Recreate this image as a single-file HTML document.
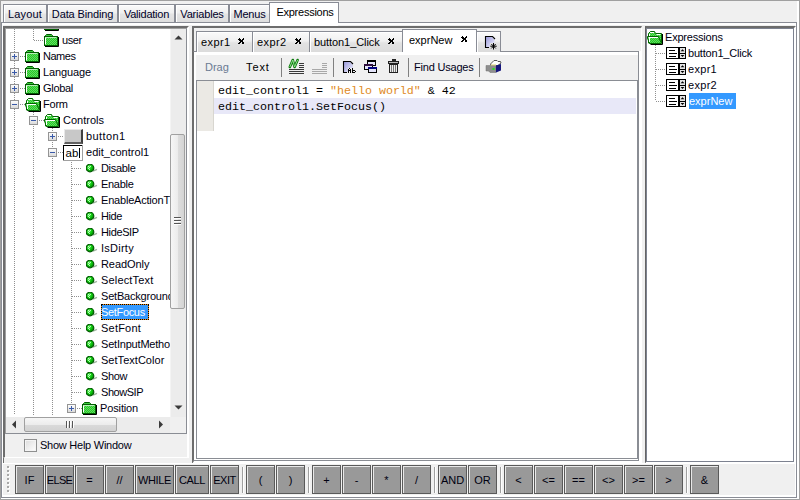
<!DOCTYPE html>
<html><head><meta charset="utf-8">
<style>
*{margin:0;padding:0;box-sizing:border-box}
html,body{width:800px;height:500px;overflow:hidden;background:#f0f0f0;font-family:"Liberation Sans",sans-serif;font-size:11px;color:#000}
.a{position:absolute}
.tab{position:absolute;top:4px;height:18px;border:1px solid #898c95;border-bottom:none;background:linear-gradient(#fafafa,#f0f0f0 45%,#e4e4e4 55%,#dedede);box-shadow:inset 1px 1px 0 #fff;font-size:11px;color:#000028;text-align:center;line-height:18px;white-space:nowrap}
.tab.sel{top:2px;height:21px;background:#fff;box-shadow:none;z-index:2;color:#000;line-height:19px;padding-left:2px}
.sunk{position:absolute;border-top:2px solid #6d6d6d;border-left:2px solid #6d6d6d;border-right:1px solid #fff;border-bottom:1px solid #fff}
.row{position:absolute;height:16px;line-height:16px;white-space:nowrap;color:#000010;letter-spacing:-0.2px}
.btn{position:absolute;top:465px;height:29px;background:#999;border:1px solid #5a5a5a;box-shadow:inset 1px 1px 0 #e8e8e8;text-align:center;line-height:27px;padding-top:1px;font-size:11px;color:#000010}
.sep{position:absolute;top:467px;height:26px;width:2px;border-left:1px solid #a0a0a0;border-right:1px solid #fff}
.dt{position:absolute;top:31px;height:21px;border:1px solid #898c95;border-bottom:none;background:linear-gradient(#fafafa,#f0f0f0 45%,#e2e2e2 55%,#dcdcdc);box-shadow:inset 1px 1px 0 #fff;font-size:11px;line-height:21px;padding-left:5px;white-space:nowrap;color:#000}
.dt.sel{top:29px;height:23px;background:#fff;box-shadow:none;color:#000;line-height:20px}
.x{position:absolute;top:0;font-weight:bold;font-size:11px}
.code{position:absolute;left:218px;font-family:"Liberation Mono",monospace;font-size:11.67px;white-space:pre;line-height:17px;color:#000}
.dv{position:absolute;width:1px;background:repeating-linear-gradient(#909090 0 1px,transparent 1px 2px)}
.dh{position:absolute;height:1px;background:repeating-linear-gradient(90deg,#909090 0 1px,transparent 1px 2px)}
.sel1{background:#3399ff;border:1px solid #f08a10}
.sel1::after{content:"";position:absolute;left:-1px;top:-1px;right:-1px;bottom:-1px;border:1px dotted #000}
svg.a{overflow:visible}
</style></head><body>

<svg width="0" height="0" style="position:absolute">
<defs>
<symbol id="fold" viewBox="0 0 16 14">
<path d="M1.5,2.5 V1.5 L2.5,0.5 H7.5 L8.5,1.5 V2.5 Z" fill="#3ccc3c" stroke="#005c00"/>
<rect x="0.5" y="2.5" width="13" height="9" fill="url(#chk)" stroke="#005c00"/>
<path d="M1.5,3.5 H12.5" stroke="#b8f0b8"/>
<path d="M1.5,3.5 V10.5" stroke="#fff"/>
<path d="M14.5,3 V12.5 H1" stroke="#000" fill="none"/>
</symbol>
<symbol id="ofold" viewBox="0 0 16 14">
<path d="M1.5,12 V2.5 L3.5,0.5 H7.5 L8.5,2.5 H14.5 V12 Z" fill="url(#chk)" stroke="#006400"/>
<path d="M3,1.5 H7 M9.5,3.5 H13.5 M2.5,3 V5" stroke="#fff"/>
<path d="M15.5,3 V13.5 H3.5" stroke="#000" fill="none"/>
<path d="M0.5,5.5 H11.5 L14.5,12.5 H2.5 L0.5,7 Z" fill="url(#chk)" stroke="#006400"/>
<path d="M1.5,6.5 H11 M2.5,7 V11" stroke="#fff"/>
</symbol>
<symbol id="plus" viewBox="0 0 9 9">
<rect x="0.5" y="0.5" width="8" height="8" fill="url(#eg)" stroke="#949494"/>
<path d="M2,4.5 H7 M4.5,2 V7" stroke="#3a5aa8"/>
</symbol>
<symbol id="minus" viewBox="0 0 9 9">
<rect x="0.5" y="0.5" width="8" height="8" fill="url(#eg)" stroke="#949494"/>
<path d="M2,4.5 H7" stroke="#3a5aa8"/>
</symbol>
<pattern id="chk" width="2" height="2" patternUnits="userSpaceOnUse"><rect width="2" height="2" fill="#28c828"/><rect width="1" height="1" fill="#60dc60"/><rect x="1" y="1" width="1" height="1" fill="#60dc60"/></pattern>
<linearGradient id="eg" x1="0" y1="0" x2="0" y2="1"><stop offset="0" stop-color="#fff"/><stop offset="1" stop-color="#d8d8d8"/></linearGradient>
<radialGradient id="bg" cx="0.35" cy="0.35" r="0.7"><stop offset="0" stop-color="#70f070"/><stop offset="0.5" stop-color="#10d010"/><stop offset="1" stop-color="#007800"/></radialGradient>
<symbol id="ball" viewBox="0 0 12 10">
<path d="M7,7.2 L11,5.4" stroke="#a0b4a0" stroke-width="1.3"/>
<circle cx="4" cy="4" r="3.8" fill="url(#bg)" stroke="#005a00" stroke-width="1.2"/>
<path shape-rendering="crispEdges" fill="#e8ffe8" opacity="0.75" d="M2,2h1v1h-1z M4,2h1v1h-1z M3,3h1v1h-1z M2,4h1v1h-1z M3,5h1v1h-1z"/>
</symbol>
<symbol id="list" viewBox="0 0 20 12">
<rect x="0.5" y="0.5" width="19" height="11" fill="#fff" stroke="#000"/>
<rect x="14" y="1" width="5" height="10" fill="#e4e4e4"/>
<path d="M12,0h2v12h-2z" fill="#000"/>
<path d="M3,3.5 H9 M3,6.5 H11 M3,9.5 H10 M14,6.5 H19" stroke="#000" shape-rendering="crispEdges"/>
<path d="M14.6,4.2 L16.5,2.2 L18.4,4.2 Z M14.6,8 L16.5,10 L18.4,8 Z" fill="#000"/>
</symbol>
<symbol id="xx" viewBox="0 0 6 6"><path shape-rendering="crispEdges" fill="#000" d="M1,0h1v1h-1z M5,0h1v1h-1z M0,1h3v1h-3z M4,1h2v1h-2z M1,2h4v1h-4z M2,3h3v1h-3z M1,4h2v1h-2z M4,4h2v1h-2z M0,5h2v1h-2z M4,5h2v1h-2z"/></symbol>
</defs></svg>

<!-- outer frame -->
<div class="a" style="left:0;top:0;width:800px;height:1px;background:#a0a0a0"></div>
<div class="a" style="left:0;top:0;width:1px;height:500px;background:#a0a0a0"></div>
<div class="a" style="left:799px;top:0;width:1px;height:500px;background:#a0a0a0"></div>
<div class="a" style="left:0;top:499px;width:800px;height:1px;background:#a0a0a0"></div>
<div class="a" style="left:797px;top:1px;width:2px;height:498px;background:#fff"></div>
<div class="a" style="left:1px;top:498px;width:798px;height:1px;background:#fff"></div>
<div class="a" style="left:1px;top:22px;width:796px;height:476px;border:1px solid #898c95"></div>
<div class="a" style="left:2px;top:23px;width:794px;height:474px;border-left:1px solid #fff;border-top:2px solid #fff;border-right:1px solid #fff;border-bottom:2px solid #fff"></div>
<!-- top tabs -->
<div class="tab" style="left:3px;width:44px;letter-spacing:0.2px">Layout</div>
<div class="tab" style="left:47px;width:71px;letter-spacing:-0.14px">Data Binding</div>
<div class="tab" style="left:118px;width:57px;letter-spacing:-0.24px">Validation</div>
<div class="tab" style="left:175px;width:54px;letter-spacing:-0.19px">Variables</div>
<div class="tab" style="left:229px;width:41px;letter-spacing:-0.2px">Menus</div>
<div class="tab sel" style="left:269px;width:70px;letter-spacing:-0.25px">Expressions</div>
<div class="a" style="left:270px;top:22px;width:68px;height:4px;background:#fff;z-index:2"></div>

<!-- left panel -->
<div class="a" style="left:3px;top:26px;width:1px;height:437px;background:#6d6d6d"></div>
<div class="sunk" style="left:3px;top:26px;width:186px;height:432px;border-right:2px solid #fff;border-bottom:1px solid #fff"></div>
<div class="a" style="left:5px;top:28px;width:182px;height:406px;background:#fff;border-top:1px solid #a0a0a0;border-left:1px solid #a0a0a0;border-right:1px solid #8a8d94;border-bottom:1px solid #8a8d94"></div>

<div class="a" style="left:6px;top:29px;width:164px;height:388px;overflow:hidden;background:#fff"><div class="a" style="left:-6px;top:-29px;width:200px;height:500px"><div class="dv" style="left:14px;top:29px;height:386px"></div>
<div class="dv" style="left:33px;top:29px;height:12px"></div>
<div class="dv" style="left:33px;top:112px;height:303px"></div>
<div class="dv" style="left:52px;top:128px;height:287px"></div>
<div class="dv" style="left:71px;top:160px;height:244px"></div>
<svg class="a" style="left:44px;top:18px" width="16" height="14"><use href="#fold"/></svg>
<div class="dh" style="left:34px;top:40px;width:10px"></div>
<svg class="a" style="left:44px;top:34px" width="16" height="14"><use href="#fold"/></svg>
<div class="row" style="left:62px;top:32px;letter-spacing:-0.43px">user</div>
<svg class="a" style="left:10px;top:52px" width="9" height="9"><use href="#plus"/></svg>
<div class="dh" style="left:20px;top:56px;width:5px"></div>
<svg class="a" style="left:25px;top:50px" width="16" height="14"><use href="#fold"/></svg>
<div class="row" style="left:43px;top:48px;letter-spacing:-0.48px">Names</div>
<svg class="a" style="left:10px;top:68px" width="9" height="9"><use href="#plus"/></svg>
<div class="dh" style="left:20px;top:72px;width:5px"></div>
<svg class="a" style="left:25px;top:66px" width="16" height="14"><use href="#fold"/></svg>
<div class="row" style="left:43px;top:64px;letter-spacing:-0.10px">Language</div>
<svg class="a" style="left:10px;top:84px" width="9" height="9"><use href="#plus"/></svg>
<div class="dh" style="left:20px;top:88px;width:5px"></div>
<svg class="a" style="left:25px;top:82px" width="16" height="14"><use href="#fold"/></svg>
<div class="row" style="left:43px;top:80px;letter-spacing:-0.30px">Global</div>
<svg class="a" style="left:10px;top:100px" width="9" height="9"><use href="#minus"/></svg>
<div class="dh" style="left:20px;top:104px;width:5px"></div>
<svg class="a" style="left:25px;top:98px" width="16" height="14"><use href="#ofold"/></svg>
<div class="row" style="left:43px;top:96px;letter-spacing:-0.23px">Form</div>
<svg class="a" style="left:29px;top:116px" width="9" height="9"><use href="#minus"/></svg>
<div class="dh" style="left:39px;top:120px;width:5px"></div>
<svg class="a" style="left:44px;top:114px" width="16" height="14"><use href="#ofold"/></svg>
<div class="row" style="left:63px;top:112px;letter-spacing:-0.00px">Controls</div>
<svg class="a" style="left:48px;top:132px" width="9" height="9"><use href="#plus"/></svg>
<div class="dh" style="left:58px;top:136px;width:5px"></div>
<div class="a" style="left:64px;top:129px;width:19px;height:15px;background:#c8c8c8;border-top:1px solid #e8e8e8;border-left:1px solid #e8e8e8;border-right:2px solid #404040;border-bottom:2px solid #606060"></div>
<div class="row" style="left:86px;top:128px;letter-spacing:0.40px">button1</div>
<svg class="a" style="left:48px;top:148px" width="9" height="9"><use href="#minus"/></svg>
<div class="dh" style="left:58px;top:152px;width:5px"></div>
<svg class="a" style="left:63px;top:145px" width="20" height="16" shape-rendering="crispEdges"><rect x="0" y="0" width="20" height="16" fill="#fff"/><path d="M0.5,15 V0.5 H19" stroke="#000" fill="none"/><path d="M19.5,0 V15.5 H0" stroke="#a0a0a0" fill="none"/><text x="2.5" y="12" font-family="Liberation Sans" font-size="11.5" fill="#000" shape-rendering="auto">ab</text><path d="M16.5,3 V13" stroke="#000"/></svg>
<div class="row" style="left:86px;top:144px;letter-spacing:0.02px">edit_control1</div>
<div class="dh" style="left:72px;top:168px;width:9px"></div>
<svg class="a" style="left:86px;top:164px" width="12" height="10"><use href="#ball"/></svg>
<div class="row" style="left:101px;top:160px;letter-spacing:-0.32px">Disable</div>
<div class="dh" style="left:72px;top:184px;width:9px"></div>
<svg class="a" style="left:86px;top:180px" width="12" height="10"><use href="#ball"/></svg>
<div class="row" style="left:101px;top:176px;letter-spacing:-0.30px">Enable</div>
<div class="dh" style="left:72px;top:200px;width:9px"></div>
<svg class="a" style="left:86px;top:196px" width="12" height="10"><use href="#ball"/></svg>
<div class="row" style="left:101px;top:192px">EnableActionT</div>
<div class="dh" style="left:72px;top:216px;width:9px"></div>
<svg class="a" style="left:86px;top:212px" width="12" height="10"><use href="#ball"/></svg>
<div class="row" style="left:101px;top:208px;letter-spacing:-0.43px">Hide</div>
<div class="dh" style="left:72px;top:232px;width:9px"></div>
<svg class="a" style="left:86px;top:228px" width="12" height="10"><use href="#ball"/></svg>
<div class="row" style="left:101px;top:224px;letter-spacing:-0.37px">HideSIP</div>
<div class="dh" style="left:72px;top:248px;width:9px"></div>
<svg class="a" style="left:86px;top:244px" width="12" height="10"><use href="#ball"/></svg>
<div class="row" style="left:101px;top:240px;letter-spacing:0.25px">IsDirty</div>
<div class="dh" style="left:72px;top:264px;width:9px"></div>
<svg class="a" style="left:86px;top:260px" width="12" height="10"><use href="#ball"/></svg>
<div class="row" style="left:101px;top:256px;letter-spacing:-0.07px">ReadOnly</div>
<div class="dh" style="left:72px;top:280px;width:9px"></div>
<svg class="a" style="left:86px;top:276px" width="12" height="10"><use href="#ball"/></svg>
<div class="row" style="left:101px;top:272px;letter-spacing:0.16px">SelectText</div>
<div class="dh" style="left:72px;top:296px;width:9px"></div>
<svg class="a" style="left:86px;top:292px" width="12" height="10"><use href="#ball"/></svg>
<div class="row" style="left:101px;top:288px">SetBackground</div>
<div class="dh" style="left:72px;top:312px;width:9px"></div>
<svg class="a" style="left:86px;top:308px" width="12" height="10"><use href="#ball"/></svg>
<div class="a sel1" style="left:101px;top:304px;width:48px;height:16px"></div>
<div class="row" style="left:101px;top:304px;color:#fff;letter-spacing:-0.33px">SetFocus</div>
<div class="dh" style="left:72px;top:328px;width:9px"></div>
<svg class="a" style="left:86px;top:324px" width="12" height="10"><use href="#ball"/></svg>
<div class="row" style="left:101px;top:320px;letter-spacing:0.22px">SetFont</div>
<div class="dh" style="left:72px;top:344px;width:9px"></div>
<svg class="a" style="left:86px;top:340px" width="12" height="10"><use href="#ball"/></svg>
<div class="row" style="left:101px;top:336px">SetInputMethod</div>
<div class="dh" style="left:72px;top:360px;width:9px"></div>
<svg class="a" style="left:86px;top:356px" width="12" height="10"><use href="#ball"/></svg>
<div class="row" style="left:101px;top:352px;letter-spacing:0.03px">SetTextColor</div>
<div class="dh" style="left:72px;top:376px;width:9px"></div>
<svg class="a" style="left:86px;top:372px" width="12" height="10"><use href="#ball"/></svg>
<div class="row" style="left:101px;top:368px;letter-spacing:-0.37px">Show</div>
<div class="dh" style="left:72px;top:392px;width:9px"></div>
<svg class="a" style="left:86px;top:388px" width="12" height="10"><use href="#ball"/></svg>
<div class="row" style="left:101px;top:384px;letter-spacing:-0.45px">ShowSIP</div>
<svg class="a" style="left:67px;top:404px" width="9" height="9"><use href="#plus"/></svg>
<div class="dh" style="left:77px;top:408px;width:5px"></div>
<svg class="a" style="left:82px;top:402px" width="16" height="14"><use href="#fold"/></svg>
<div class="row" style="left:100px;top:400px;letter-spacing:-0.13px">Position</div></div></div>
<div class="a" style="left:170px;top:29px;width:16px;height:388px;background:#ececec;border-left:1px solid #f4f4f4"></div>
<div class="a" style="left:170px;top:134px;width:15px;height:175px;border:1px solid #a0a0a0;border-radius:2px;background:linear-gradient(90deg,#f6f6f6,#ececec 50%,#dedede 51%,#d4d4d4)"></div>
<div class="a" style="left:174px;top:217px;width:7px;height:1px;background:#555;box-shadow:0 1px 0 #fff,0 3px 0 #555,0 4px 0 #fff,0 6px 0 #555,0 7px 0 #fff"></div>
<svg class="a" style="left:174px;top:35px" width="9" height="6"><path d="M0.5,4.5 L4.5,0.5 L8.5,4.5 Z" fill="#3a3a3a"/></svg>
<svg class="a" style="left:174px;top:405px" width="9" height="6"><path d="M0.5,0.5 L4.5,4.5 L8.5,0.5 Z" fill="#3a3a3a"/></svg>
<div class="a" style="left:6px;top:417px;width:164px;height:16px;background:#ececec"></div>
<div class="a" style="left:24px;top:417px;width:93px;height:15px;border:1px solid #a0a0a0;border-radius:2px;background:linear-gradient(#f6f6f6,#ececec 50%,#dadada 51%,#d2d2d2)"></div>
<div class="a" style="left:66px;top:421px;width:1px;height:7px;background:#555;box-shadow:1px 0 0 #fff,3px 0 0 #555,4px 0 0 #fff,6px 0 0 #555,7px 0 0 #fff"></div>
<svg class="a" style="left:11px;top:420px" width="6" height="9"><path d="M5,0.5 L1,4.5 L5,8.5 Z" fill="#3a3a3a"/></svg>
<svg class="a" style="left:158px;top:420px" width="6" height="9"><path d="M1,0.5 L5,4.5 L1,8.5 Z" fill="#3a3a3a"/></svg>
<div class="a" style="left:170px;top:417px;width:16px;height:16px;background:#f0f0f0"></div>
<div class="a" style="left:24px;top:439px;width:13px;height:13px;border:1px solid #8e8f8f;background:linear-gradient(135deg,#dcdcdc,#fff);box-shadow:inset 0 0 0 1px #f4f4f4"></div>
<div class="a" style="left:40px;top:438px;font-size:11px;color:#000010;line-height:14px;letter-spacing:-0.25px">Show Help Window</div>

<!-- center panel -->
<div class="sunk" style="left:192px;top:26px;width:450px;height:438px;border-right:1px solid #fff;border-bottom:3px solid #fff"></div>


<!-- center panel content -->
<div class="a" style="left:193px;top:51px;width:446px;height:410px;border:1px solid #8a8d94;border-left-color:#6d6d6d"></div>
<div class="a" style="left:194px;top:52px;width:444px;height:408px;border-top:3px solid #fff;border-left:2px solid #fff;border-bottom:1px solid #fff"></div>
<div class="dt" style="left:196px;width:57px;letter-spacing:0.4px;padding-left:4px">expr1<svg class="x" style="left:41px;top:6px" width="6" height="6"><use href="#xx"/></svg></div>
<div class="dt" style="left:252px;width:58px;letter-spacing:0.4px;padding-left:4px">expr2<svg class="x" style="left:42px;top:6px" width="6" height="6"><use href="#xx"/></svg></div>
<div class="dt" style="left:309px;width:94px;padding-left:4px;letter-spacing:-0.08px">button1_Click<svg class="x" style="left:78px;top:6px" width="6" height="6"><use href="#xx"/></svg></div>
<div class="dt sel" style="left:402px;width:75px;padding-left:6px">exprNew<svg class="x" style="left:58px;top:6px" width="6" height="6"><use href="#xx"/></svg></div>
<div class="dt" style="left:476px;width:25px"></div>
<div class="a" style="left:639px;top:51px;width:2px;height:410px;background:#fff"></div>

<!-- toolbar -->
<div class="a" style="left:205px;top:61px;color:#6b7b93;font-size:11px">Drag</div>
<div class="a" style="left:246px;top:61px;color:#000;font-size:11px;letter-spacing:0.9px">Text</div>
<div class="a" style="left:281px;top:58px;width:1px;height:19px;background:#808080"></div>
<div class="a" style="left:333px;top:58px;width:1px;height:19px;background:#808080"></div>
<div class="a" style="left:408px;top:58px;width:1px;height:19px;background:#808080"></div>
<div class="a" style="left:414px;top:61px;color:#000018;font-size:11px;letter-spacing:-0.2px">Find Usages</div>
<div class="a" style="left:479px;top:58px;width:1px;height:19px;background:#808080"></div>

<!-- toolbar icons -->
<svg class="a" style="left:288px;top:58px" width="16" height="17" shape-rendering="crispEdges">
<path d="M11,5.5 H16 M11,7.5 H16 M11,9.5 H16 M1,11.5 H16 M1,13.5 H16 M1,15.5 H16" stroke="#3a3a3a"/>
</svg>
<svg class="a" style="left:288px;top:58px" width="12" height="11">
<path d="M1.8,9 L4.8,2 L6.6,9 L9.6,2" fill="none" stroke="#0b7a0b" stroke-width="2.6" stroke-linejoin="round" stroke-linecap="round"/>
<path d="M1.8,9 L4.8,2 L6.6,9 L9.6,2" fill="none" stroke="#9be89b" stroke-width="0.9" stroke-linejoin="round"/>
</svg>
<svg class="a" style="left:311px;top:58px" width="16" height="17" shape-rendering="crispEdges">
<path d="M11,5.5 H16 M11,7.5 H16 M11,9.5 H16 M1,11.5 H16 M1,13.5 H16 M1,15.5 H16" stroke="#a8a8a8"/>
</svg>
<svg class="a" style="left:342px;top:60px" width="16" height="14">
<defs><linearGradient id="dg" x1="0" y1="0" x2="1" y2="1"><stop offset="0" stop-color="#9c9cdc"/><stop offset="0.7" stop-color="#d8d8f4"/><stop offset="1" stop-color="#fff"/></linearGradient></defs>
<path d="M2,2 H8 L11,5 V8 H6 V12 H2 Z" fill="url(#dg)"/>
<path d="M1.5,1 V12.5 H5 M1.5,1.5 H8.5 L11,4" fill="none" stroke="#000" stroke-width="1.1"/>
<path shape-rendering="crispEdges" fill="#000" d="M7,8h1v1h-1z M6,9h1v4h-1z M8,9h1v4h-1z M7,10h1v1h-1z M10,8h1v5h-1z M11,10h2v1h-2z M13,11h1v1h-1z M11,12h2v1h-2z"/>
</svg>
<svg class="a" style="left:363px;top:59px" width="15" height="15" shape-rendering="crispEdges">
<rect x="4.5" y="1.5" width="8" height="5" fill="#e4e4fa" stroke="#000"/>
<path d="M4,1.5 H13" stroke="#000" stroke-width="2"/>
<rect x="1.5" y="5.5" width="8" height="5" fill="#e4e4fa" stroke="#000"/>
<path d="M1,5.5 H10" stroke="#301040" stroke-width="2"/>
<rect x="5.5" y="8.5" width="8" height="5" fill="#e4e4fa" stroke="#000"/>
<path d="M5,9 H14" stroke="#000080" stroke-width="2"/>
</svg>
<svg class="a" style="left:387px;top:59px" width="13" height="15" shape-rendering="crispEdges">
<rect x="5.5" y="0.5" width="3" height="1" fill="#333" stroke="#222"/>
<rect x="1.5" y="2.5" width="10" height="2" fill="#bbb" stroke="#222"/>
<rect x="2.5" y="5.5" width="8" height="8" fill="#eee" stroke="#222"/>
<path d="M4.5,6 V13 M6.5,6 V13 M8.5,6 V13" stroke="#777"/>
</svg>
<svg class="a" style="left:483px;top:57px" width="20" height="17">
<path d="M7.5,7 L11,3.5 H14 L15,4.5 H17.5 L18,6 L15,8.5 H8 Z" fill="#fff" stroke="#444" stroke-width="0.9"/>
<path d="M3,8.5 H13 V15.5 H7 L5.5,14 H3 Z" fill="#8e8e8e" stroke="#707070" stroke-width="0.5"/>
<path d="M13,8.5 L18,7 V13.5 L13,15.5 Z" fill="#16167c"/>
<path d="M8,8 H13" stroke="#e4dc8c" stroke-width="1.2"/>
<rect x="9.5" y="11" width="2" height="2" fill="#22e022"/>
</svg>
<svg class="a" style="left:484px;top:35px" width="16" height="16">
<path d="M2,2 H8 L10.5,4.5 V8 H6 V12 H2 Z" fill="url(#dg)"/>
<path d="M1.5,1 V12.5 H5 M1.5,1.5 H8.5 L11,4" fill="none" stroke="#000" stroke-width="1.1"/>
<path d="M9.5,8 V14.5 M6.3,11.2 H12.7 M7.3,9 L11.7,13.4 M11.7,9 L7.3,13.4" stroke="#000" stroke-width="1"/>
</svg>

<!-- editor -->
<div class="a" style="left:196px;top:80px;width:442px;height:379px;background:#fff;border:1px solid #8a8d94"></div>
<div class="a" style="left:197px;top:81px;width:17px;height:50px;background:#ebe9e4;border-right:1px solid #d8d6d0"></div>
<div class="a" style="left:214px;top:98px;width:422px;height:16px;background:#e8e8f8"></div>
<div class="code" style="top:83px">edit_control1 = <span style="color:#e08a1e">"hello world"</span> &amp; 42</div>
<div class="code" style="top:99px">edit_control1.SetFocus()</div>

<!-- right panel -->
<div class="sunk" style="left:645px;top:26px;width:151px;height:438px;border-left:1px solid #646464;border-right:2px solid #fff;border-bottom:2px solid #fff"></div>
<div class="a" style="left:646px;top:28px;width:148px;height:434px;background:#fff;border:1px solid #7d8290"></div>

<svg class="a" style="left:647px;top:31px" width="16" height="14"><use href="#ofold"/></svg>
<div class="row" style="left:665px;top:29px">Expressions</div>
<div class="dv" style="left:655px;top:45px;height:56px"></div>
<div class="dh" style="left:656px;top:53px;width:10px"></div>
<svg class="a" style="left:666px;top:47px" width="20" height="12"><use href="#list"/></svg>
<div class="row" style="left:688px;top:45px">button1_Click</div>
<div class="dh" style="left:656px;top:69px;width:10px"></div>
<svg class="a" style="left:666px;top:63px" width="20" height="12"><use href="#list"/></svg>
<div class="row" style="left:688px;top:61px;letter-spacing:0.3px">expr1</div>
<div class="dh" style="left:656px;top:85px;width:10px"></div>
<svg class="a" style="left:666px;top:79px" width="20" height="12"><use href="#list"/></svg>
<div class="row" style="left:688px;top:77px;letter-spacing:0.3px">expr2</div>
<div class="dh" style="left:656px;top:101px;width:10px"></div>
<svg class="a" style="left:666px;top:95px" width="20" height="12"><use href="#list"/></svg>
<div class="a" style="left:689px;top:93px;width:47px;height:16px;background:#3399ff"></div>
<div class="row" style="left:689px;top:93px;color:#fff;letter-spacing:0px">exprNew</div>
<div class="a" style="left:3px;top:463px;width:793px;height:1px;background:#fff"></div>
<!-- bottom toolbar -->
<div class="a" style="left:7px;top:466px;width:2px;height:2px;background:#a8a8a8;box-shadow:1px 1px 0 #fff"></div><div class="a" style="left:7px;top:470px;width:2px;height:2px;background:#a8a8a8;box-shadow:1px 1px 0 #fff"></div><div class="a" style="left:7px;top:474px;width:2px;height:2px;background:#a8a8a8;box-shadow:1px 1px 0 #fff"></div><div class="a" style="left:7px;top:478px;width:2px;height:2px;background:#a8a8a8;box-shadow:1px 1px 0 #fff"></div><div class="a" style="left:7px;top:482px;width:2px;height:2px;background:#a8a8a8;box-shadow:1px 1px 0 #fff"></div><div class="a" style="left:7px;top:486px;width:2px;height:2px;background:#a8a8a8;box-shadow:1px 1px 0 #fff"></div><div class="a" style="left:7px;top:490px;width:2px;height:2px;background:#a8a8a8;box-shadow:1px 1px 0 #fff"></div>
<div class="btn" style="left:15px;width:29px">IF</div>
<div class="btn" style="left:45px;width:29px;letter-spacing:-0.7px">ELSE</div>
<div class="btn" style="left:75px;width:29px">=</div>
<div class="btn" style="left:105px;width:29px">//</div>
<div class="btn" style="left:135px;width:39px;letter-spacing:-0.4px">WHILE</div>
<div class="btn" style="left:175px;width:34px;letter-spacing:-0.4px">CALL</div>
<div class="btn" style="left:210px;width:29px;letter-spacing:-0.5px">EXIT</div>
<div class="sep" style="left:242px"></div>
<div class="btn" style="left:246px;width:29px">(</div>
<div class="btn" style="left:276px;width:29px">)</div>
<div class="sep" style="left:308px"></div>
<div class="btn" style="left:312px;width:29px">+</div>
<div class="btn" style="left:342px;width:29px">-</div>
<div class="btn" style="left:372px;width:29px">*</div>
<div class="btn" style="left:402px;width:29px">/</div>
<div class="sep" style="left:434px"></div>
<div class="btn" style="left:438px;width:29px">AND</div>
<div class="btn" style="left:468px;width:29px">OR</div>
<div class="sep" style="left:500px"></div>
<div class="btn" style="left:504px;width:29px">&lt;</div>
<div class="btn" style="left:534px;width:29px">&lt;=</div>
<div class="btn" style="left:564px;width:29px">==</div>
<div class="btn" style="left:594px;width:29px">&lt;&gt;</div>
<div class="btn" style="left:624px;width:29px">&gt;=</div>
<div class="btn" style="left:654px;width:29px">&gt;</div>
<div class="sep" style="left:686px"></div>
<div class="btn" style="left:690px;width:29px">&amp;</div>
</body></html>
